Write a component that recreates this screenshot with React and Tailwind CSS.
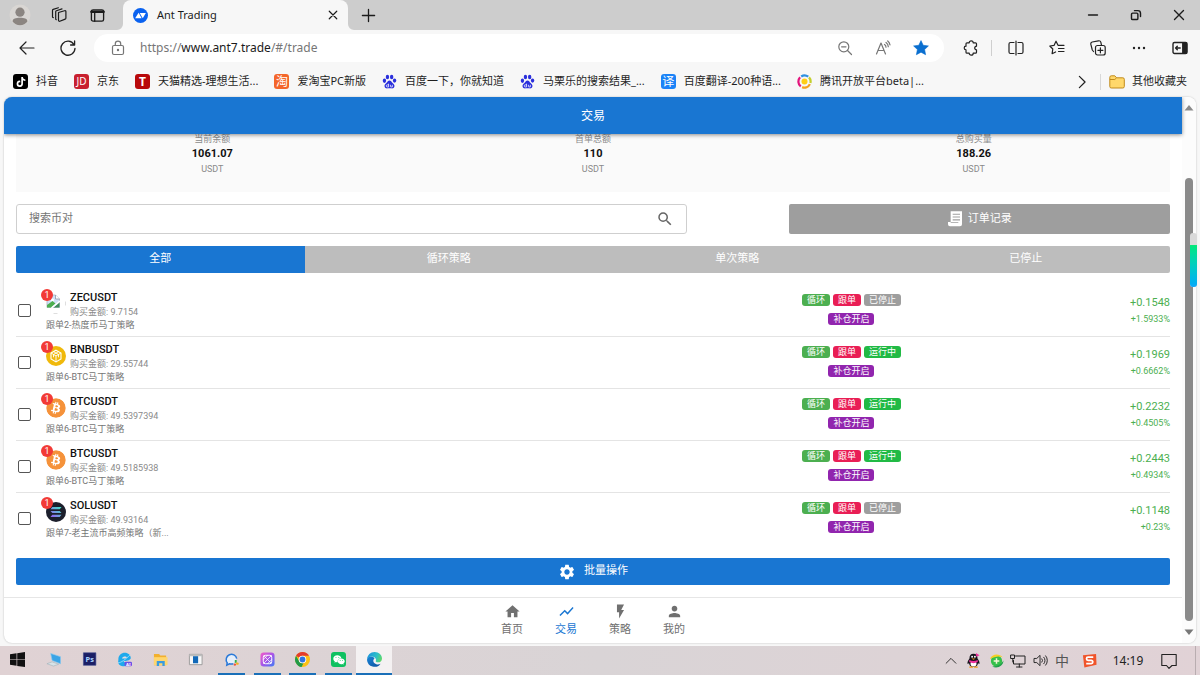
import React from "react";
import {
  MdHome,
  MdShowChart,
  MdFlashOn,
  MdPerson,
  MdSettings,
  MdSearch,
} from "react-icons/md";
import { FaTiktok, FaBitcoin, FaWeixin } from "react-icons/fa";

/* ---------- shared drawing helpers ---------- */

function Line({ children, className = "size-4", w = 1.2 }) {
  return (
    <svg
      viewBox="0 0 16 16"
      className={className}
      fill="none"
      stroke="currentColor"
      strokeWidth={w}
      strokeLinecap="round"
      strokeLinejoin="round"
      aria-hidden="true"
    >
      {children}
    </svg>
  );
}

function IconButton({ label, className = "", children }) {
  return (
    <button
      type="button"
      aria-label={label}
      className={`flex shrink-0 items-center justify-center ${className}`}
    >
      {children}
    </button>
  );
}

/* ---------- browser window ---------- */

function TabStrip() {
  return (
    <div className="flex h-[30px] bg-[#cdcdcd] text-[#1b1b1b]">
      <IconButton label="个人资料" className="w-[39px]">
        <svg viewBox="0 0 22 22" className="size-[22px]" aria-hidden="true">
          <circle cx="11" cy="11" r="10.5" fill="#d9d6d3" />
          <circle cx="11" cy="8.2" r="4.6" fill="#8b8581" />
          <path d="M3.6 17.5c0-3 3.2-3.7 7.4-3.7s7.4.7 7.4 3.7c-1.7 2.3-4.3 3.7-7.4 3.7s-5.700-1.400-7.400-3.700z" fill="#8b8581" />
        </svg>
      </IconButton>
      <IconButton label="工作区" className="w-[39px]">
        <Line>
          <path d="M7.5 5.5l6-1.8a1 1 0 0 1 1.4 1v6.4a1 1 0 0 1-.7 1l-5.400 2.200a1 1 0 0 1-1.300-1z" />
          <path d="M5.3 12.7a1 1 0 0 1-.6-1V4.7a1 1 0 0 1 .7-1l5.600-1.800" />
          <path d="M2.3 10.7a1 1 0 0 1-.8-1V3.4a1 1 0 0 1 .7-1L7.4.8" />
        </Line>
      </IconButton>
      <IconButton label="标签页操作菜单" className="w-[39px]">
        <Line className="size-[15px]" w={1.4}>
          <rect x="1.5" y="2" width="13" height="12" rx="1.8" />
          <path d="M1.5 4h13" strokeWidth="2.6" />
          <path d="M5 5v9" />
        </Line>
      </IconButton>

      <div className="relative ml-1.5 flex w-[225px] items-center rounded-t-lg bg-[#f7f7f7] pr-[7px] pl-2.5">
        <svg viewBox="0 0 6 6" className="absolute bottom-0 -left-1.5 size-1.5" aria-hidden="true">
          <path d="M6 0v6H0a6 6 0 0 0 6-6z" fill="#f7f7f7" />
        </svg>
        <svg viewBox="0 0 6 6" className="absolute -right-1.5 bottom-0 size-1.5" aria-hidden="true">
          <path d="M0 0v6h6a6 6 0 0 1-6-6z" fill="#f7f7f7" />
        </svg>
        <svg viewBox="0 0 16 16" className="size-[15px]" aria-hidden="true">
          <circle cx="8" cy="8" r="8" fill="#0a62f0" />
          <path d="M2.3 10.8 6 5l3.200 5.800z" fill="#fff" />
          <path d="M7.2 5.2h6.500l-3.300 5.600z" fill="#fff" />
        </svg>
        <span className="ml-[9px] flex-1 text-[11px]">Ant Trading</span>
        <IconButton label="关闭标签页" className="size-4">
          <Line className="size-3" w={1.6}>
            <path d="M3 3l10 10M13 3L3 13" />
          </Line>
        </IconButton>
      </div>

      <IconButton label="新建标签页" className="w-10">
        <Line className="size-[15px]" w={1.4}>
          <path d="M8 1.5v13M1.5 8h13" />
        </Line>
      </IconButton>

      <div className="ml-auto flex">
        <IconButton label="最小化" className="w-[43px]">
          <Line className="size-3" w={1.8}>
            <path d="M2 8h12" />
          </Line>
        </IconButton>
        <IconButton label="还原" className="w-[43px]">
          <Line className="size-3" w={1.9}>
            <rect x="2" y="5.5" width="8.5" height="8.5" rx="1.5" />
            <path d="M6 2.2h4.500a3.500 3.500 0 0 1 3.500 3.500V10" />
          </Line>
        </IconButton>
        <IconButton label="关闭" className="w-[43px]">
          <Line className="size-3" w={1.8}>
            <path d="M2 2l12 12M14 2L2 14" />
          </Line>
        </IconButton>
      </div>
    </div>
  );
}

function Toolbar() {
  return (
    <div className="flex h-9 items-center bg-[#f7f7f7] pl-1.5 text-[#222]">
      <IconButton label="后退" className="w-[41px]">
        <Line>
          <path d="M15 8H1M7 2 1 8l6 6" />
        </Line>
      </IconButton>
      <IconButton label="刷新" className="w-[41px]">
        <Line w={1.3}>
          <path d="M14 4.6A7 7 0 1 0 15 8.300M14.600 1v4h-4" />
        </Line>
      </IconButton>
      <div className="mx-1.5 flex h-7 flex-1 items-center rounded-full bg-white pr-1 pl-4">
        <span className="text-[#767676]">
          <Line>
            <rect x="2.5" y="5.5" width="11" height="9" rx="1.5" />
            <path d="M5.3 5.5V3.8a2.700 2.700 0 0 1 5.400 0v1.700" />
            <circle cx="8" cy="10" r=".6" fill="currentColor" />
          </Line>
        </span>
        <span className="ml-3.5 flex-1 text-[12px] text-[#767676]">
          https://<span className="text-[#1b1b1b]">www.ant7.trade</span>/#/trade
        </span>
        <IconButton label="缩小" className="w-[38px] text-[#767676]">
          <Line>
            <circle cx="6.8" cy="6.8" r="5" />
            <path d="M4.6 6.8H9M10.500 10.500l4 4" />
          </Line>
        </IconButton>
        <IconButton label="大声朗读" className="w-[38px] text-[#767676]">
          <Line>
            <path d="M1.5 14 6 3l4.500 11M3 10.500h6M9.500 4.500a3 3 0 0 1 1.500 2.700M11 2.500a5.500 5.500 0 0 1 2.300 4.200M12.700 1a7 7 0 0 1 2.300 3.800" />
          </Line>
        </IconButton>
        <IconButton label="编辑收藏夹" className="w-[38px] text-[#0a6fd0]">
          <svg viewBox="0 0 16 16" className="size-4" fill="currentColor" aria-hidden="true">
            <path d="M8 .6l2.200 4.700 5.200.6-3.800 3.600 1 5.200L8 12.200l-4.600 2.500 1-5.200L.6 5.900l5.200-.6z" stroke="currentColor" strokeLinejoin="round" strokeWidth=".6" />
          </svg>
        </IconButton>
      </div>
      <IconButton label="扩展" className="w-[41px]">
        <Line>
          <path d="M4 2.800h2.200a2 2 0 0 1 4 0h2.300a1 1 0 0 1 1 1v2.400a1.800 1.800 0 1 0 0 3.600v2.400a1 1 0 0 1-1 1h-2.300a2 2 0 0 1-4 0H4a1 1 0 0 1-1-1V9.800a1.800 1.800 0 0 1 0-3.600V3.800a1 1 0 0 1 1-1z" />
        </Line>
      </IconButton>
      <span className="mr-[3px] h-4 w-px bg-[#cfcfcf]" />
      <IconButton label="分屏" className="w-[41px]">
        <Line>
          <path d="M6 2.500H2.500a1.500 1.500 0 0 0-1.500 1.500v8a1.500 1.500 0 0 0 1.500 1.500H6M10 2.500h3.500A1.500 1.500 0 0 1 15 4v8a1.500 1.500 0 0 1-1.500 1.500H10M8 1v14" />
        </Line>
      </IconButton>
      <IconButton label="收藏夹" className="w-[41px]">
        <Line>
          <path d="M9.500 5.300H9L7 1.200 5 5.400.8 6l3 3-.7 4.700L6.600 12M9.500 5.300H15M9.500 8.500H15M9.500 11.500H15" />
        </Line>
      </IconButton>
      <IconButton label="集锦" className="w-[41px]">
        <Line>
          <rect x="5.5" y="5.5" width="9.7" height="9.5" rx="2" />
          <path d="M10.400 7.800v5M7.900 10.300h5M3.500 11.500 2.300 10 .8 4.200A2 2 0 0 1 2.200 2L8.500.8a2 2 0 0 1 2.300 1.400l.7 3" />
        </Line>
      </IconButton>
      <IconButton label="设置及其他" className="w-[41px]">
        <svg viewBox="0 0 16 16" className="size-4" fill="currentColor" aria-hidden="true">
          <circle cx="3" cy="8" r="1.2" />
          <circle cx="8" cy="8" r="1.2" />
          <circle cx="13" cy="8" r="1.2" />
        </svg>
      </IconButton>
      <IconButton label="侧边栏" className="w-[41px]">
        <Line w={1.4}>
          <rect x="1" y="2.5" width="14" height="11" rx="1.5" />
          <path d="M10.800 3h3.700v10h-3.700z" fill="currentColor" />
          <path d="M8.200 8H3.800M5.300 6.300 3.600 8l1.700 1.700" />
        </Line>
      </IconButton>
    </div>
  );
}

const tile = "flex size-[15px] shrink-0 items-center justify-center rounded-[3px]";

const favourites = [
  {
    name: "抖音",
    icon: (
      <span className={`${tile} bg-black text-white`}>
        <FaTiktok className="size-2.5" />
      </span>
    ),
  },
  {
    name: "京东",
    icon: <span className={`${tile} bg-[#c8202f] text-[10px] text-white`}>JD</span>,
  },
  {
    name: "天猫精选-理想生活...",
    icon: <span className={`${tile} bg-[#b8090b] text-[12px] font-bold text-white`}>T</span>,
  },
  {
    name: "爱淘宝PC新版",
    icon: <span className={`${tile} bg-[#f4662a] text-[12px] text-white`}>淘</span>,
  },
  { name: "百度一下，你就知道", icon: <Baidu /> },
  { name: "马栗乐的搜索结果_...", icon: <Baidu /> },
  {
    name: "百度翻译-200种语...",
    icon: <span className={`${tile} bg-[#1b83f7] text-[12px] text-white`}>译</span>,
  },
  {
    name: "腾讯开放平台beta|...",
    icon: (
      <svg viewBox="0 0 16 16" className="size-[15px] shrink-0" fill="none" strokeWidth="2.4" aria-hidden="true">
        <path d="M4 13.200A6.500 6.500 0 0 1 3.300 3.500" stroke="#e3147c" />
        <path d="M4.500 2.600A6.500 6.500 0 0 1 12 2.900" stroke="#2e8fe0" />
        <path d="M12.800 3.600A6.500 6.500 0 0 1 14.300 9.500" stroke="#c3cf2b" />
        <path d="M13.800 10.800A6.500 6.500 0 0 1 5.500 14" stroke="#f5a11c" />
        <circle cx="8" cy="8" r="3.2" fill="#ffce17" />
      </svg>
    ),
  },
];

function Baidu() {
  return (
    <svg viewBox="0 0 16 16" className="size-[15px] shrink-0" fill="#2a2fdc" aria-hidden="true">
      <ellipse cx="2.6" cy="7.2" rx="1.8" ry="2.3" />
      <ellipse cx="5.8" cy="3.2" rx="1.8" ry="2.5" />
      <ellipse cx="10.3" cy="3.2" rx="1.8" ry="2.5" />
      <ellipse cx="13.4" cy="7" rx="1.8" ry="2.3" />
      <path d="M8 6.800c1.500 0 2.200 1.500 3.300 2.700 1.200 1.200 2.200 2 2 3.600-.3 2-2 2.500-3.500 2.200-1.200-.2-2.400-.2-3.600 0-1.500.3-3.200-.2-3.500-2.200-.2-1.600.8-2.400 2-3.600C5.800 8.300 6.500 6.800 8 6.800z" />
      <path d="M7 10.300v3.500H5.600a1 1 0 0 1 0-2.200H7M9 11.500v1.800q0 .5.500.5h1.500v-2.300" fill="none" stroke="#fff" strokeWidth=".8" />
    </svg>
  );
}

function FavouritesBar() {
  return (
    <nav aria-label="收藏夹栏" className="flex h-[31px] items-center bg-[#f7f7f7] pr-[13px] pl-[13px] text-[11px] text-[#1f1f1f]">
      <ul className="flex min-w-0 flex-1 items-center gap-4 overflow-hidden">
        {favourites.map((f) => (
          <li key={f.name} className="shrink-0">
            <a href="#fav" className="flex items-center gap-2 whitespace-nowrap">
              {f.icon}
              {f.name}
            </a>
          </li>
        ))}
      </ul>
      <IconButton label="更多收藏" className="mr-2 w-5">
        <Line className="size-3.5" w={1.4}>
          <path d="M5 1.500 11.500 8 5 14.500" />
        </Line>
      </IconButton>
      <span className="mr-2 h-4 w-px bg-[#d8d8d8]" />
      <button type="button" className="flex items-center gap-[7px]">
        <svg viewBox="0 0 16 16" className="size-4" aria-hidden="true">
          <path d="M.8 3.300a1.500 1.500 0 0 1 1.500-1.500h3.500l1.800 2h6.200a1.500 1.500 0 0 1 1.500 1.500v7.200a1.500 1.500 0 0 1-1.500 1.500H2.300a1.500 1.500 0 0 1-1.500-1.500z" fill="#ffd86b" stroke="#c08a1c" />
          <path d="M.8 5.500h5l1.800-1.700" fill="none" stroke="#c08a1c" />
        </svg>
        其他收藏夹
      </button>
    </nav>
  );
}

/* ---------- trading page ---------- */

const stats = [
  { label: "当前余额", value: "1061.07" },
  { label: "首单总额", value: "110" },
  { label: "总购买量", value: "188.26" },
];

const filters = ["全部", "循环策略", "单次策略", "已停止"];

const positions = [
  { id: 1, coin: "ZEC", amount: "9.7154", plan: "跟单2-热度币马丁策略", running: false, profit: "+0.1548", rate: "+1.5933%" },
  { id: 2, coin: "BNB", amount: "29.55744", plan: "跟单6-BTC马丁策略", running: true, profit: "+0.1969", rate: "+0.6662%" },
  { id: 3, coin: "BTC", amount: "49.5397394", plan: "跟单6-BTC马丁策略", running: true, profit: "+0.2232", rate: "+0.4505%" },
  { id: 4, coin: "BTC", amount: "49.5185938", plan: "跟单6-BTC马丁策略", running: true, profit: "+0.2443", rate: "+0.4934%" },
  { id: 5, coin: "SOL", amount: "49.93164", plan: "跟单7-老主流币高频策略（新...", running: false, profit: "+0.1148", rate: "+0.23%" },
];

function Coin({ coin }) {
  if (coin === "BTC") {
    return <FaBitcoin className="size-5 rounded-full bg-white text-[#f5923a]" />;
  }
  if (coin === "BNB") {
    return (
      <svg viewBox="0 0 20 20" className="size-5" fill="none" stroke="#fff" aria-hidden="true">
        <circle cx="10" cy="10" r="10" fill="#f0b90b" stroke="none" />
        <path d="M10 4.200 15 7v6l-5 2.900L5 13V7z" strokeWidth="1.1" />
        <path d="M5 7l5 2.900L15 7M10 9.900v6M7.500 5.600l5 2.900v2.800M12.500 5.600l-5 2.900v2.800" strokeWidth=".9" />
      </svg>
    );
  }
  if (coin === "SOL") {
    return (
      <svg viewBox="0 0 20 20" className="size-5" aria-hidden="true">
        <defs>
          <linearGradient id="sol" gradientUnits="userSpaceOnUse" x1="5" y1="15" x2="15" y2="5">
            <stop offset="0" stopColor="#9a5bf5" />
            <stop offset="1" stopColor="#3fe8c5" />
          </linearGradient>
        </defs>
        <circle cx="10" cy="10" r="10" fill="#1c1f2c" />
        <path d="M6.300 5h9.200l-1.800 2.200H4.500zM4.500 8.900h9.200l1.800 2.200H6.300zM6.300 12.800h9.200l-1.800 2.200H4.500z" fill="url(#sol)" />
      </svg>
    );
  }
  return (
    <svg viewBox="0 0 20 20" className="size-5" aria-hidden="true">
      <path d="M1 1h8.500l4 4v8.500H1z" fill="#cfe0f7" stroke="#a9b3bf" strokeWidth=".8" />
      <path d="M9.500 1v4h4" fill="#fff" stroke="#8d98a5" strokeWidth=".8" />
      <circle cx="6.500" cy="6" r="1.600" fill="#fff" />
      <path d="M1 13.500v-2.500L6.500 7l3 2.500-4.500 4z" fill="#4caf50" />
      <path d="M13.500 8.500v5H7.500z" fill="#3d8b5a" />
      <path d="M14 7 5.500 14" stroke="#fff" strokeWidth="1.500" />
      <path d="M19.500 7.500v4M7.500 19.500h4" stroke="#d5d5d5" strokeWidth=".8" />
    </svg>
  );
}

function Tag({ className, children }) {
  return (
    <span className={`rounded-[3px] px-[5px] text-[9px] leading-3 text-white ${className}`}>
      {children}
    </span>
  );
}

function PositionRow({ item }) {
  const symbol = `${item.coin}USDT`;
  return (
    <li className="flex items-center border-b border-[#e4e4e4] pt-1.5 pb-[5px] last:border-transparent">
      <div className="flex w-1/2 items-center gap-[15px] pl-0.5">
        <input
          type="checkbox"
          aria-label={`${symbol} ${item.amount}`}
          className="mb-0.5 size-[13px] shrink-0 appearance-none rounded-[2px] border border-[#555] bg-white checked:bg-[#1976d2]"
        />
        <div className="min-w-0">
          <div className="flex items-start gap-1">
            <div className="relative mt-[3px] size-5 shrink-0">
              <Coin coin={item.coin} />
              <span className="absolute -top-[5px] -left-[5px] flex size-3 items-center justify-center rounded-full bg-[#f23a36] text-[9px] leading-3 text-white">
                1
              </span>
            </div>
            <div>
              <h2 className="text-[11px] leading-[14px] font-medium text-[#111]">{symbol}</h2>
              <p className="text-[9px] leading-[14px] text-[#8a8a8a]">购买金额: {item.amount}</p>
            </div>
          </div>
          <p className="truncate text-[9px] leading-3 text-[#757575]">{item.plan}</p>
        </div>
      </div>
      <div className="flex flex-1 flex-col items-center gap-[7px] pb-1">
        <div className="flex gap-[3px]">
          <Tag className="bg-[#4caf50]">循环</Tag>
          <Tag className="bg-[#e91e55]">跟单</Tag>
          {item.running ? (
            <Tag className="bg-[#21ba45]">运行中</Tag>
          ) : (
            <Tag className="bg-[#9e9e9e]">已停止</Tag>
          )}
        </div>
        <Tag className="bg-[#9125ae]">补仓开启</Tag>
      </div>
      <div className="ml-5 text-right text-[#4caf50]">
        <p className="text-[11px] leading-4">{item.profit}</p>
        <p className="text-[9px] leading-4">{item.rate}</p>
      </div>
    </li>
  );
}

const tabs = [
  { name: "首页", Icon: MdHome },
  { name: "交易", Icon: MdShowChart, active: true },
  { name: "策略", Icon: MdFlashOn },
  { name: "我的", Icon: MdPerson },
];

function TradePage() {
  return (
    <div className="flex min-w-0 flex-1 flex-col font-[Roboto,'Noto_Sans_CJK_SC',sans-serif]">
      <header className="z-10 flex h-[37px] items-center justify-center bg-[#1976d2] text-white shadow-[0_1px_4px_rgba(0,0,0,0.45)]">
        <h1 className="text-[12px]">交易</h1>
      </header>

      <main className="flex flex-1 flex-col px-3">
        <dl className="grid grid-cols-3 bg-[#fafafa] px-1.5 pb-[17px] text-center">
          {stats.map((s) => (
            <div key={s.label}>
              <dt className="text-[9px] leading-[11px] text-[#8a8a8a]">{s.label}</dt>
              <dd className="text-[11px] leading-[18px] font-bold text-[#111]">{s.value}</dd>
              <dd className="text-[9px] leading-3 text-[#8a8a8a]">USDT</dd>
            </div>
          ))}
        </dl>

        <div className="mt-3 grid grid-cols-12 gap-1.5">
          <div className="col-span-7 flex h-[30px] items-center rounded-[3px] border border-[#cfcfcf] px-3">
            <input
              type="text"
              aria-label="搜索币对"
              placeholder="搜索币对"
              className="min-w-0 flex-1 bg-transparent text-[11px] outline-none placeholder:text-[#757575]"
            />
            <IconButton label="搜索" className="text-[#666]">
              <MdSearch className="size-[18px]" />
            </IconButton>
          </div>
          <button
            type="button"
            className="col-span-4 col-start-9 flex items-center justify-center gap-1.5 rounded-[2px] bg-[#9e9e9e] text-[11px] text-white"
          >
            <svg viewBox="0 0 21 24" className="h-4 w-3.5" fill="currentColor" aria-hidden="true">
              <path
                fillRule="evenodd"
                d="M4 .5h17v19.500a3 3 0 0 1-3 3H3a3 3 0 0 1-3-3v-3.500h4zM7 4v1.700h11V4zM7 8.200v1.700h11V8.200zM7 12.400v1.700h11v-1.700zM4 16.500v1.200h11.500v-1.200z"
              />
            </svg>
            订单记录
          </button>
        </div>

        <div role="tablist" className="mt-3 grid h-[27px] grid-cols-4 overflow-hidden rounded-[2px] text-[11px] text-white">
          {filters.map((name, i) => (
            <button
              key={name}
              type="button"
              role="tab"
              aria-selected={i === 0}
              className={i === 0 ? "bg-[#1976d2]" : "bg-[#bdbdbd]"}
            >
              {name}
            </button>
          ))}
        </div>

        <ul className="mt-3">
          {positions.map((item) => (
            <PositionRow key={item.id} item={item} />
          ))}
        </ul>

        <button
          type="button"
          className="mt-[13px] mb-3 flex h-[27px] items-center justify-center gap-2 rounded-[2px] bg-[#1976d2] text-[11px] text-white"
        >
          <MdSettings className="size-[18px]" />
          批量操作
        </button>
      </main>

      <nav aria-label="主导航" className="flex h-[46px] justify-center border-t border-[#e6e6e6] text-[11px]">
        {tabs.map(({ name, Icon, active }) => (
          <a
            key={name}
            href="#nav"
            aria-current={active ? "page" : undefined}
            className={`flex w-[54px] flex-col items-center gap-0.5 pt-[5px] leading-4 ${
              active ? "text-[#1976d2]" : "text-[#707070]"
            }`}
          >
            <Icon className="size-[17px]" />
            {name}
          </a>
        ))}
      </nav>
    </div>
  );
}

function Scrollbar() {
  return (
    <div className="flex w-3.5 flex-col items-center bg-[#fcfcfc] py-2">
      <svg viewBox="0 0 10 6" className="h-[6px] w-2.5" fill="#8a8a8a" aria-hidden="true">
        <path d="M5 0l4.500 5.500h-9z" />
      </svg>
      <div className="flex w-2 flex-1 flex-col pt-[67px] pb-2">
        <div className="flex-1 rounded-full bg-[#8a8a8a]" />
      </div>
      <svg viewBox="0 0 10 6" className="h-[6px] w-2.5" fill="#777" aria-hidden="true">
        <path d="M5 6L.5.5h9z" />
      </svg>
    </div>
  );
}

/* ---------- Windows taskbar ---------- */

const apps = [
  {
    name: "开始",
    art: <path d="M0 2.300 7 1.300v6.300H0zM7.700 1.200 16 0v7.600H7.700zM0 8.300h7v6.300L0 13.700zM7.700 8.300H16V16l-8.300-1.200z" fill="#111" />,
  },
  {
    name: "此电脑",
    art: (
      <>
        <path d="M5 1.500 15.500 5v7.500L6.500 9z" fill="#3aa4e6" stroke="#8bc9ee" strokeWidth=".7" />
        <path d="M1 12.500 6.500 10.500l7 2.500-5.500 2z" fill="#d8e3e8" stroke="#9fb0b8" strokeWidth=".6" />
      </>
    ),
  },
  {
    name: "Photoshop",
    art: (
      <>
        <path d="M1.500.8h13.300v13.400H1.500z" fill="#1b1f66" stroke="#3c4a8f" strokeWidth=".6" />
        <text x="8.200" y="10.500" textAnchor="middle" fontSize="8" fontWeight="700" fill="#a8d4ff">Ps</text>
      </>
    ),
  },
  {
    name: "AI 浏览器",
    art: (
      <>
        <path d="M1.500 8.500C1 4 4.500.8 8.300.8c3.700 0 6.500 2.700 6.400 5.700-.2 2.300-4.200 3.300-7.700 3.100 1 2 3.500 3 7 1.900-2.300 4.200-8 4.700-11.500 2C1.200 12.500 1 10 1.500 8.500z" fill="#1fa9ec" />
        <path d="M5.300 6.800c.7-2 4.500-2.500 5.200-1-.5 1.200-3 1.500-5.200 1z" fill="#e6dcdf" />
        <path d="M1 11.500C4.500 11.500 9 8 14 3" stroke="#8fdcff" strokeWidth="1" fill="none" />
        <rect x="8" y="10.300" width="8" height="5" rx="1.500" fill="#6a50e8" />
        <text x="12" y="14.500" textAnchor="middle" fontSize="4.500" fontWeight="700" fill="#fff">AI</text>
      </>
    ),
  },
  {
    name: "文件资源管理器",
    art: (
      <>
        <path d="M1 2h5.500l1.300 1.800H14V14H1z" fill="#f2b02e" />
        <path d="M1 5.500h14.500V14H1z" fill="#ffd66e" />
        <path d="M4 15V9.500h8.500V15H10v-3H6.500v3z" fill="#3a9be0" />
      </>
    ),
  },
  {
    name: "应用程序",
    art: (
      <>
        <path d="M1.500 2.500h13.500v11H1.500z" fill="#f7f7f7" stroke="#9a9a9a" />
        <path d="M1.500 2.500h13.500v2H1.500z" fill="#bdbdbd" />
        <path d="M5.300 4.500h5.500v7.500H5.300z" fill="#1268b8" />
      </>
    ),
  },
  {
    name: "企业微信",
    running: true,
    art: (
      <>
        <path d="M10 12.500c-1.500.4-2.800.4-4.200 0L3 14l.4-2.500A5.700 5.700 0 1 1 13.600 7" fill="#e6effa" stroke="#2a79d8" strokeWidth="1.600" />
        <path d="M12.500 8.500v3" stroke="#2fb14c" strokeWidth="2" />
        <path d="M11 14.500l1.300-2" stroke="#f0503a" strokeWidth="2" />
        <path d="M13 12l2.500.8" stroke="#f6b21b" strokeWidth="2.200" />
      </>
    ),
  },
  {
    name: "设计工具",
    running: true,
    art: (
      <>
        <defs>
          <linearGradient id="ds" x1="0" y1="0" x2="1" y2="1">
            <stop offset="0" stopColor="#f45cc8" />
            <stop offset=".5" stopColor="#a855e8" />
            <stop offset="1" stopColor="#3c7df5" />
          </linearGradient>
        </defs>
        <rect x=".5" y=".5" width="15" height="15" rx="3.500" fill="url(#ds)" />
        <rect x="3.500" y="3.500" width="9" height="9" rx="2" fill="none" stroke="#fff" />
        <path d="M3.500 12.500 12.500 3.500M3.500 8 8 3.500M8 12.500 12.500 8M4 4l8 8" stroke="#fff" strokeWidth=".8" />
      </>
    ),
  },
  {
    name: "Chrome",
    running: true,
    art: (
      <>
        <circle cx="8" cy="8" r="8" fill="#fbc116" />
        <path d="M8 0a8 8 0 0 1 6.900 4H8a4 4 0 0 0-3.500 2L1.100 4A8 8 0 0 1 8 0z" fill="#e33b2e" />
        <path d="M1.100 4l3.400 6A4 4 0 0 0 9 11.900L7 16A8 8 0 0 1 1.100 4z" fill="#229a48" />
        <circle cx="8" cy="8" r="4" fill="#fff" />
        <circle cx="8" cy="8" r="3.100" fill="#2f74e0" />
      </>
    ),
  },
  { name: "微信", running: true, wechat: true },
  {
    name: "Edge",
    running: true,
    active: true,
    art: (
      <>
        <defs>
          <linearGradient id="eg" x1="0" y1=".3" x2="1" y2=".6">
            <stop offset="0" stopColor="#1c93dc" />
            <stop offset=".6" stopColor="#2cc0c8" />
            <stop offset="1" stopColor="#5fd86a" />
          </linearGradient>
          <linearGradient id="eb" x1="0" y1="0" x2="1" y2="1">
            <stop offset="0" stopColor="#1a86d8" />
            <stop offset="1" stopColor="#0c4f9e" />
          </linearGradient>
        </defs>
        <path d="M0 8.500C0 5.500 2.500 4.500 5 4.800c1.500.2 2.500 1 3 2-1.800 1.200-2.200 5 2 6.200 1.800.5 3.400 0 4.500-.6A8 8 0 0 1 0 8.500z" fill="url(#eb)" />
        <path d="M0 8C.3 3.300 3.800 0 8 0c5 0 8 3.500 8 6.800 0 2.700-2 4.200-4.300 4.200-2 0-2.700-.7-2.300-1.600.9-1.500-.8-4.600-4.200-4.600C2.700 4.800.5 6.200 0 8z" fill="url(#eg)" />
      </>
    ),
  },
];

function Taskbar() {
  return (
    <footer className="mt-[3px] flex h-[29px] bg-linear-to-r from-[#e0d2d4] via-[#d9d4d6] to-[#e1d2d6] text-[#222]">
      <div className="grid w-[392px] grid-cols-11">
        {apps.map((a) => (
          <button
            key={a.name}
            type="button"
            aria-label={a.name}
            className={`flex flex-col items-center ${a.active ? "bg-[#f4f1f2]" : ""}`}
          >
            <span className="flex flex-1 items-center">
              {a.wechat ? (
                <span className="flex size-[15px] items-center justify-center rounded-[3px] bg-[#0ec160] text-white">
                  <FaWeixin className="size-3" />
                </span>
              ) : (
                <svg viewBox="0 0 16 16" className="size-[15px]" aria-hidden="true">
                  {a.art}
                </svg>
              )}
            </span>
            <span
              className={`h-0.5 ${a.active ? "w-full" : "w-[27px]"} ${a.running ? "bg-[#1a6fb8]" : "bg-transparent"}`}
            />
          </button>
        ))}
      </div>

      <div className="ml-auto flex items-center">
        <IconButton label="显示隐藏的图标" className="w-[23px]">
          <Line className="size-3">
            <path d="M1.500 11 8 4.500l6.500 6.500" />
          </Line>
        </IconButton>
        <IconButton label="QQ" className="w-[23px]">
          <svg viewBox="0 0 16 16" className="size-[15px]" aria-hidden="true">
            <path d="M8 .8c3 0 4.300 2.200 4.300 5 1.500 2 2.500 4 2 6l-1.500-1C12.300 13.500 10.500 15 8 15s-4.300-1.500-4.800-4.200l-1.500 1c-.5-2 .5-4 2-6C3.700 3 5 .8 8 .8z" fill="#17131c" />
            <ellipse cx="8" cy="11.500" rx="3.200" ry="3" fill="#fff" />
            <circle cx="6.500" cy="4" r="1" fill="#fff" />
            <circle cx="9.500" cy="4" r="1" fill="#fff" />
            <path d="M3.500 7.500q4.500 2.300 9 0v2.200q-4.500 2.200-9 0zM10.500 0l4 2.500-3.500 1.500z" fill="#ee2f9b" />
            <path d="M5.800 5.800h4.400L8 7.200zM3.500 14.300h4v1.500h-4zM8.500 14.300h4v1.500h-4z" fill="#f7a01c" />
          </svg>
        </IconButton>
        <IconButton label="安全卫士" className="w-[22px]">
          <svg viewBox="0 0 16 16" className="size-[15px]" aria-hidden="true">
            <circle cx="8" cy="8.500" r="6" fill="#35c04a" />
            <path d="M1 6.500C3 .5 11 0 14.500 4.500 11 3 6 3.500 1 6.500z" fill="#f5cf24" />
            <path d="M15.300 8c.5 5-6 9.500-12 6.300C8 14.500 13 12.500 15.300 8z" fill="#22a04a" />
            <path d="M8 5.500v6M5 8.500h6" stroke="#f4f7d8" strokeWidth="1.600" />
          </svg>
        </IconButton>
        <IconButton label="网络" className="w-[22px]">
          <Line w={1}>
            <path d="M5.500 3H15v8H3.500V7.500M9.300 11v3M6.500 14h5.500M1 2h3.500v3.500H1zM2.800 5.500V9" />
          </Line>
        </IconButton>
        <IconButton label="音量" className="w-[22px]">
          <Line className="size-[15px]" w={1}>
            <path d="M1.500 5.800h2.500L7.500 2.500v11L4 10.200H1.500zM9.500 6.200a2.800 2.800 0 0 1 0 3.600M11.500 4.500a5 5 0 0 1 0 7M13.500 3a7.500 7.500 0 0 1 0 10" />
          </Line>
        </IconButton>
        <IconButton label="输入法" className="w-[22px]">
          <span className="text-[14px] leading-4 text-[#555]">中</span>
        </IconButton>
        <IconButton label="搜狗输入法" className="w-8">
          <svg viewBox="0 0 16 16" className="size-[15px]" aria-hidden="true">
            <path d="M1 2.500 15 1l.5 11.500L2.500 15.500z" fill="#f0542a" />
            <path d="M12 4.500H6.500a1.700 1.700 0 0 0 0 3.400h3.300a1.700 1.700 0 0 1 0 3.400H4.500" fill="none" stroke="#fff" strokeWidth="1.900" />
          </svg>
        </IconButton>
        <time className="w-[46px] text-center text-[12px]">14:19</time>
        <IconButton label="通知" className="w-9">
          <Line w={1.1}>
            <path d="M.8 1.500h14.400v11H11L8 15.300 5.500 12.500H.8z" />
          </Line>
        </IconButton>
        <span className="ml-2 h-full w-px bg-[#b9adb0]" />
        <span className="w-1" />
      </div>
    </footer>
  );
}

export default function App() {
  return (
    <div className="relative flex min-h-screen flex-col bg-[#f7f7f7] font-['Noto_Sans','Noto_Sans_CJK_SC',sans-serif]">
      <TabStrip />
      <Toolbar />
      <FavouritesBar />
      <div className="mx-1 flex flex-1 overflow-hidden rounded-lg bg-white shadow-[0_0_2px_rgba(0,0,0,0.25)]">
        <TradePage />
        <Scrollbar />
      </div>
      <Taskbar />
      <div className="absolute top-[233px] right-[3px] h-[54px] w-[7px] rounded-[3px] bg-[#d9d9d9]">
        <div className="mt-3 h-[42px] rounded-b-[3px] bg-linear-to-b from-[#08e878] to-[#10a8fa]" />
      </div>
    </div>
  );
}
